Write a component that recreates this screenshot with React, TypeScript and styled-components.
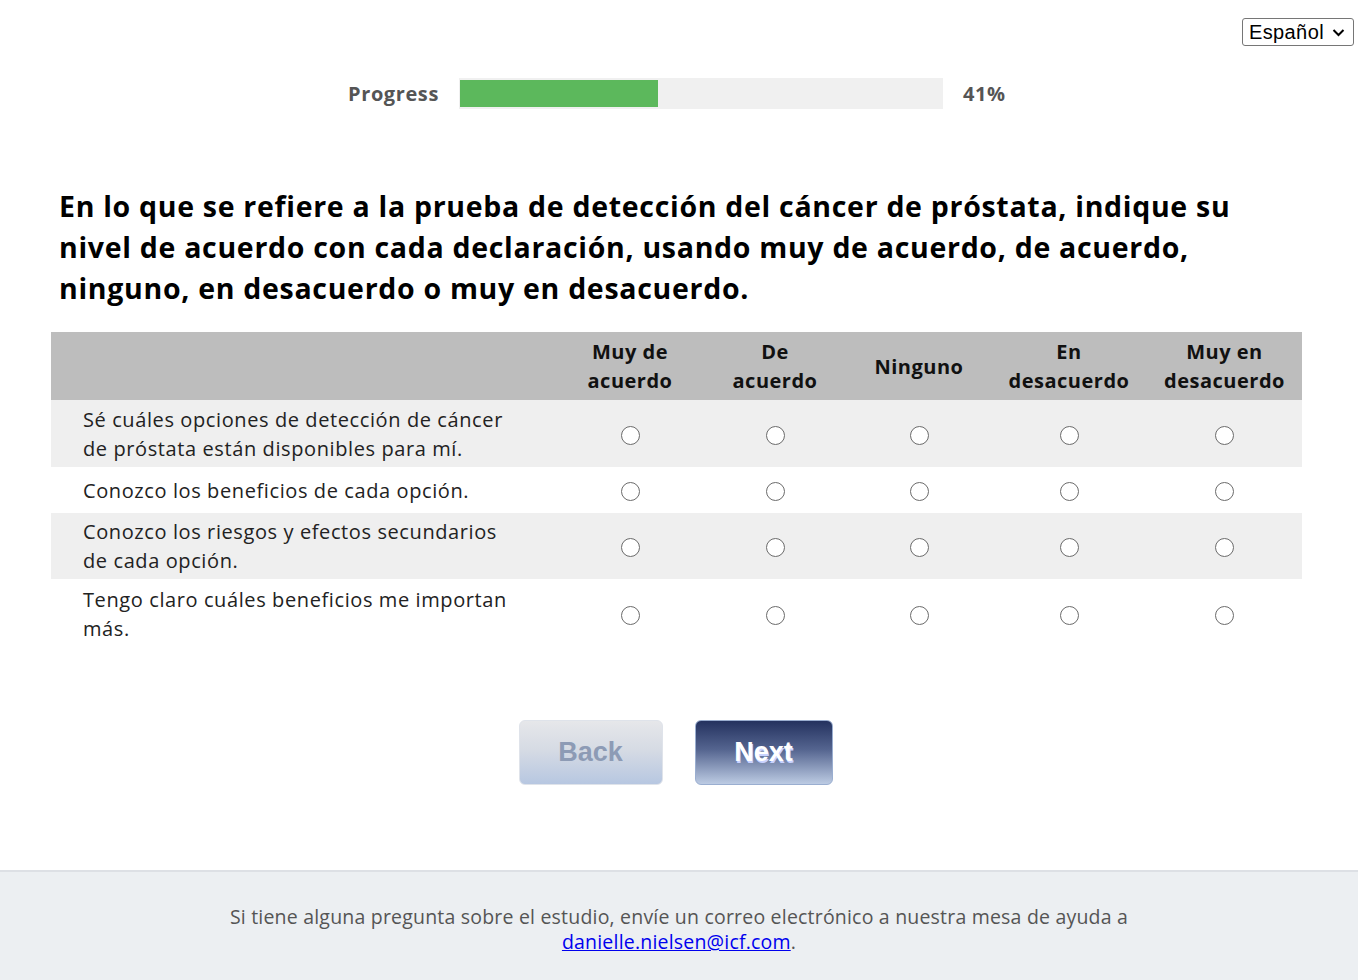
import React from "react";
import styled, { createGlobalStyle } from "styled-components";

const Global = createGlobalStyle`
  html, body { margin: 0; padding: 0; background: #fff; }
  body { font-family: "Open Sans", "Liberation Sans", sans-serif; }
`;

const Page = styled.div`
  min-height: 980px;
  display: flex;
  flex-direction: column;
`;

const Main = styled.main`
  flex: 1;
  display: flex;
  flex-direction: column;
  padding: 0 56px 0 51px;
`;

const TopBar = styled.div`
  display: flex;
  justify-content: flex-end;
  padding-top: 18px;
  margin-right: -52px;
`;

const LangSelect = styled.div`
  display: flex;
  align-items: center;
  gap: 8px;
  height: 28px;
  box-sizing: border-box;
  padding: 0 8px 0 6px;
  border: 1px solid #767676;
  border-radius: 3px;
  font-family: "Liberation Sans", Arial, sans-serif;
  font-size: 20px;
  letter-spacing: 0.4px;
  color: #000;
`;

const ProgressRow = styled.div`
  display: flex;
  align-items: center;
  justify-content: center;
  margin-top: 32px;
  gap: 20px;
  padding-left: 6px;
`;

const ProgressLabel = styled.span`
  font-weight: 700;
  font-size: 20px;
  letter-spacing: 0.6px;
  color: #555;
`;

const Track = styled.div`
  width: 484px;
  height: 31px;
  background: #f0f0f0;
  padding: 2px 1px;
  box-sizing: border-box;
  display: flex;
`;

const Fill = styled.div`
  background: #5cb85c;
  height: 100%;
`;

const Pct = styled.span`
  font-weight: 700;
  font-size: 20px;
  letter-spacing: 0.6px;
  color: #555;
  width: 48px;
`;

const Question = styled.h1`
  margin: 77px 0 23px 8px;
  max-width: 1200px;
  font-size: 28.5px;
  font-weight: 700;
  line-height: 41px;
  letter-spacing: 0.7px;
  color: #000;
`;

const Table = styled.table`
  width: 1251px;
  border-collapse: collapse;
  table-layout: fixed;
`;

const HeadRow = styled.tr`
  background: #bdbdbd;
`;

const Th = styled.th`
  font-size: 20px;
  font-weight: 700;
  line-height: 29px;
  letter-spacing: 0.5px;
  color: #111;
  text-align: center;
  padding: 5px 0 5px;
  height: 58px;
`;

const Row = styled.tr<{ $shade: boolean; $h: number }>`
  background: ${(p) => (p.$shade ? "#efefef" : "#fff")};
  height: ${(p) => p.$h}px;
`;

const LabelCell = styled.td`
  font-size: 20px;
  line-height: 29px;
  letter-spacing: 0.6px;
  color: #222;
  padding: 4px 36px 4px 32px;
`;

const RadioCell = styled.td`
  text-align: center;
  vertical-align: middle;
`;

const Radio = styled.span`
  display: inline-block;
  width: 17px;
  height: 17px;
  border: 1.5px solid #6b6b6b;
  border-radius: 50%;
  background: #fff;
  vertical-align: middle;
`;

const Buttons = styled.div`
  display: flex;
  justify-content: center;
  gap: 32px;
  margin-top: 72px;
  margin-bottom: 85px;
  padding-right: 2px;
`;

const Btn = styled.button<{ $primary?: boolean }>`
  width: ${(p) => (p.$primary ? 138 : 144)}px;
  height: 65px;
  border-radius: 6px;
  border: 1px solid ${(p) => (p.$primary ? "#9aaed0" : "#dfe3ea")};
  font-family: "Liberation Sans", Arial, sans-serif;
  font-weight: 700;
  font-size: 27px;
  cursor: pointer;
  background: ${(p) =>
    p.$primary
      ? "linear-gradient(to bottom, #24325f 0%, #54648f 45%, #bccbe3 100%)"
      : "linear-gradient(to bottom, #e6e7ea 0%, #d6dbe4 45%, #b7c7e1 100%)"};
  color: ${(p) => (p.$primary ? "#fff" : "#8d9bb5")};
  text-shadow: ${(p) => (p.$primary ? "1px 2px 0 #c9d3ff" : "none")};
`;

const Footer = styled.footer`
  background: #eceff2;
  border-top: 2px solid #dde0e5;
  height: 110px;
  box-sizing: border-box;
  padding-top: 32px;
  text-align: center;
  font-size: 19.5px;
  letter-spacing: 0.2px;
  line-height: 25px;
  color: #555;
`;

const Mail = styled.a`
  color: #0000ee;
  text-decoration: underline;
`;

const cols = ["Muy de acuerdo", "De acuerdo", "Ninguno", "En desacuerdo", "Muy en desacuerdo"];
const colWidths = [506, 146, 144, 144, 156, 155];

const items: { text: string; h: number }[] = [
  { text: "Sé cuáles opciones de detección de cáncer de próstata están disponibles para mí.", h: 67 },
  { text: "Conozco los beneficios de cada opción.", h: 46 },
  { text: "Conozco los riesgos y efectos secundarios de cada opción.", h: 66 },
  { text: "Tengo claro cuáles beneficios me importan más.", h: 69 },
];

function HeadLabel({ text }: { text: string }) {
  const i = text.lastIndexOf(" ");
  if (i < 0) return <>{text}</>;
  return (
    <>
      {text.substring(0, i)}
      <br />
      {text.substring(i + 1)}
    </>
  );
}

export default function App() {
  return (
    <Page>
      <Global />
      <Main>
        <TopBar>
          <LangSelect>
            Español
            <svg width="13" height="9" viewBox="0 0 13 9">
              <path d="M1.5 2 L6.5 7 L11.5 2" fill="none" stroke="#000" strokeWidth="2" />
            </svg>
          </LangSelect>
        </TopBar>
        <ProgressRow>
          <ProgressLabel>Progress</ProgressLabel>
          <Track>
            <Fill style={{ width: "41%" }} />
          </Track>
          <Pct>41%</Pct>
        </ProgressRow>
        <Question>
          En lo que se refiere a la prueba de detección del cáncer de próstata, indique su nivel de acuerdo con
          cada declaración, usando muy de acuerdo, de acuerdo, ninguno, en desacuerdo o muy en desacuerdo.
        </Question>
        <Table>
          <colgroup>
            {colWidths.map((w, i) => (
              <col key={i} style={{ width: w }} />
            ))}
          </colgroup>
          <thead>
            <HeadRow>
              <Th />
              {cols.map((c) => (
                <Th key={c}>
                  <HeadLabel text={c} />
                </Th>
              ))}
            </HeadRow>
          </thead>
          <tbody>
            {items.map((it, i) => (
              <Row key={i} $shade={i % 2 === 0} $h={it.h}>
                <LabelCell>{it.text}</LabelCell>
                {cols.map((c) => (
                  <RadioCell key={c}>
                    <Radio />
                  </RadioCell>
                ))}
              </Row>
            ))}
          </tbody>
        </Table>
        <Buttons>
          <Btn>Back</Btn>
          <Btn $primary>Next</Btn>
        </Buttons>
      </Main>
      <Footer>
        Si tiene alguna pregunta sobre el estudio, envíe un correo electrónico a nuestra mesa de ayuda a
        <br />
        <Mail href="#">danielle.nielsen@icf.com</Mail>.
      </Footer>
    </Page>
  );
}
